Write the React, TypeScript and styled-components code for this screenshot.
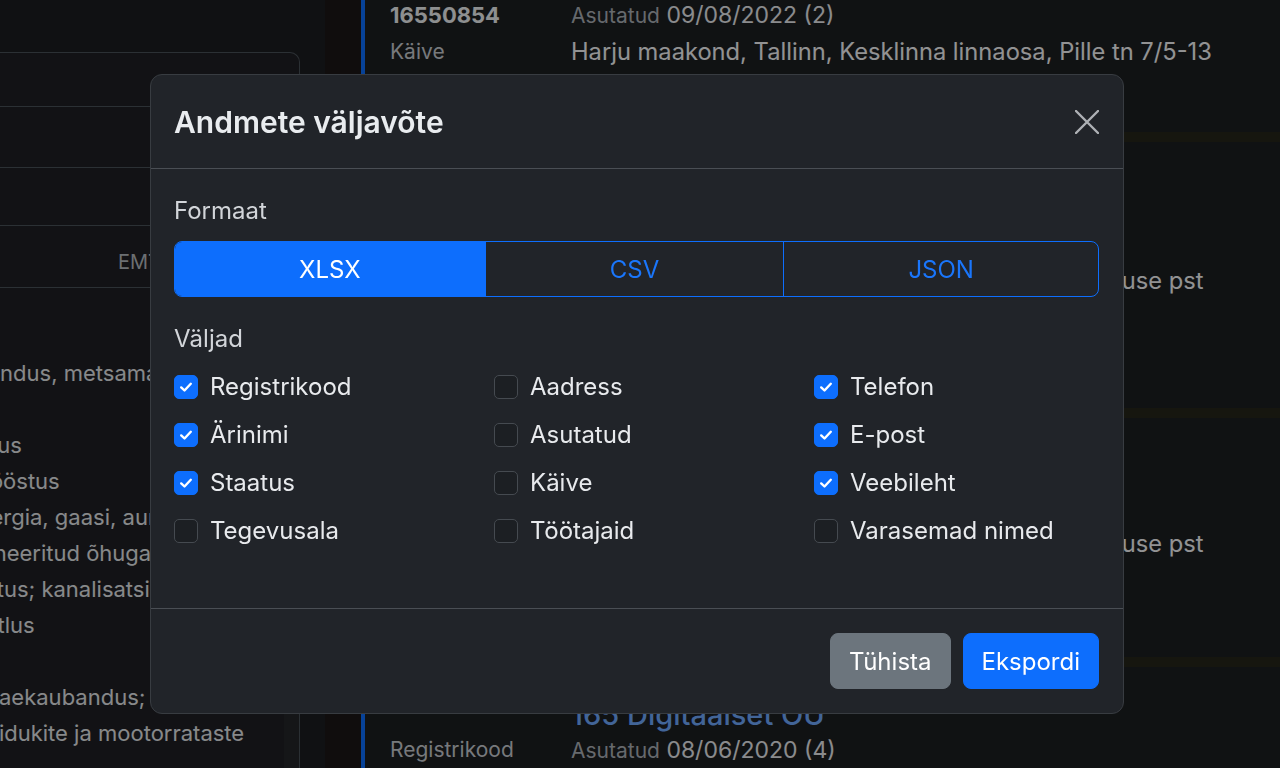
import React from "react";
import styled, { createGlobalStyle } from "styled-components";

const GlobalStyle = createGlobalStyle`
  * { box-sizing: border-box; }
  html, body {
    margin: 0;
    padding: 0;
    width: 1280px;
    height: 768px;
    overflow: hidden;
    background: #1c1d21;
  }
  body {
    font-family: Inter, "Noto Sans", "Liberation Sans", sans-serif;
    -webkit-font-smoothing: antialiased;
  }
`;

/* ---------- background page ---------- */

const Page = styled.div`
  width: 1280px;
  height: 768px;
  overflow: hidden;
  background: #1c1d21;
  display: flex;
`;

const Sidebar = styled.aside`
  flex: 0 0 420px;
  width: 420px;
  min-width: 0;
  overflow: hidden;
  margin-left: -120px;
  padding-top: 52px;
  display: flex;
  flex-direction: column;
`;

const FilterCard = styled.div`
  flex: 1;
  min-width: 0;
  border-top: 1px solid #495057;
  border-right: 1px solid #495057;
  border-top-right-radius: 10px;
  background: #1e1f23;
  display: flex;
  flex-direction: column;
`;

const FilterRow = styled.div<{ $h: number; $indent?: number }>`
  height: ${(p) => p.$h}px;
  flex: 0 0 auto;
  border-bottom: 1px solid #495057;
  display: flex;
  align-items: center;
  padding: 11px 0 0 ${(p) => p.$indent ?? 20}px;
  color: #b4b9be;
  font-size: 20px;
  white-space: nowrap;
  overflow: hidden;
`;

const SectorSection = styled.div`
  flex: 1;
  display: flex;
  min-height: 0;
  min-width: 0;
`;

const SectorList = styled.ul`
  flex: 1;
  min-width: 0;
  margin: 0;
  list-style: none;
  padding: 67px 0 0 20px;
  color: #e2e4e7;
  font-size: 22px;
  line-height: 36px;
  white-space: nowrap;
  overflow: hidden;
`;

const SectorItem = styled.li`
  margin: 0;
`;

const ScrollTrack = styled.div`
  flex: 0 0 15px;
  background: #242529;
`;

const MainArea = styled.main`
  flex: 1;
  display: flex;
  padding-left: 25px;
  min-width: 0;
`;

const Rail = styled.div`
  flex: 0 0 36px;
  background: #1b1717;
`;

const ListViewport = styled.div`
  flex: 1;
  overflow: hidden;
  min-width: 0;
`;

const List = styled.div`
  margin-top: -68px;
  display: flex;
  flex-direction: column;
  gap: 10px;
  background: #26261a;
`;

const Item = styled.article<{ $pt: number; $h: number }>`
  height: ${(p) => p.$h}px;
  flex: 0 0 auto;
  padding: ${(p) => p.$pt}px 24px 0 25px;
  border-left: 4px solid #0d6efd;
  background: #1c1e21;
  display: grid;
  grid-template-columns: 181px 1fr;
  grid-auto-rows: min-content;
  align-content: start;
  white-space: nowrap;
`;

const ItemTitle = styled.div`
  grid-column: 2;
  font-size: 29px;
  line-height: 34px;
  font-weight: 500;
  color: #6ea8fe;
`;

const LeftCell = styled.div<{ $strong?: boolean }>`
  grid-column: 1;
  line-height: 36px;
  font-size: ${(p) => (p.$strong ? 22 : 21)}px;
  font-weight: ${(p) => (p.$strong ? 700 : 400)};
  color: ${(p) => (p.$strong ? "#eceef1" : "#c6cacf")};
`;

const RightCell = styled.div<{ $address?: boolean }>`
  grid-column: 2;
  line-height: 36px;
  font-size: ${(p) => (p.$address ? 23.7 : 23)}px;
  color: ${(p) => (p.$address ? "#f3f4f6" : "#e6e8eb")};
`;

const Muted = styled.span`
  color: #aab0b6;
  font-size: 21px;
`;

/* ---------- modal ---------- */

const Backdrop = styled.div`
  position: fixed;
  inset: 0;
  background: rgba(0, 0, 0, 0.4);
`;

const ModalLayer = styled.div`
  position: fixed;
  inset: 0;
  padding: 74px 0 0 150px;
`;

const Dialog = styled.div`
  width: 974px;
  height: 640px;
  background: #212429;
  border: 1px solid #383c41;
  border-radius: 12px;
  display: flex;
  flex-direction: column;
  color: #e6e8eb;
  overflow: hidden;
`;

const Header = styled.header`
  height: 94px;
  flex: 0 0 94px;
  padding: 0 24px 0 23px;
  border-bottom: 1px solid #4a4e54;
  display: flex;
  align-items: center;
  justify-content: space-between;
`;

const Title = styled.h5`
  margin: 0;
  font-size: 30px;
  line-height: 42px;
  font-weight: 600;
  color: #e9ecef;
`;

const CloseButton = styled.button`
  width: 24px;
  height: 24px;
  padding: 0;
  border: 0;
  background: transparent;
  color: #aeb1b5;
  display: flex;
  align-items: center;
  justify-content: center;
  cursor: pointer;
`;

const Body = styled.div`
  flex: 1;
  padding: 24px 24px 24px 23px;
  display: flex;
  flex-direction: column;
`;

const SectionLabel = styled.div<{ $mt?: number }>`
  font-size: 24px;
  line-height: 36px;
  color: #d2d5d9;
  margin-top: ${(p) => p.$mt ?? 0}px;
  margin-bottom: 12px;
`;

const ButtonGroup = styled.div`
  display: flex;
  height: 56px;
  border: 1px solid #0d6efd;
  border-radius: 8px;
  overflow: hidden;
`;

const GroupButton = styled.button<{ $active?: boolean }>`
  flex: 1 1 auto;
  border: 0;
  border-left: 1px solid #0d6efd;
  background: ${(p) => (p.$active ? "#0d6efd" : "transparent")};
  color: ${(p) => (p.$active ? "#ffffff" : "#1a76fb")};
  font-family: inherit;
  font-size: 24px;
  cursor: pointer;
  &:first-child {
    border-left: 0;
  }
`;

const FieldGrid = styled.div`
  display: grid;
  grid-template-columns: repeat(3, 320px);
  grid-auto-rows: 36px;
  row-gap: 12px;
`;

const FieldLabel = styled.label`
  display: flex;
  align-items: center;
  gap: 12px;
  font-size: 24px;
  line-height: 36px;
  color: #e8eaed;
  white-space: nowrap;
`;

const Box = styled.span<{ $checked?: boolean }>`
  width: 24px;
  height: 24px;
  flex: 0 0 24px;
  border-radius: 5px;
  border: 1px solid ${(p) => (p.$checked ? "#0d6efd" : "#454a50")};
  background: ${(p) => (p.$checked ? "#0d6efd" : "#1c1f23")};
  display: flex;
  align-items: center;
  justify-content: center;
`;

const Footer = styled.footer`
  flex: 0 0 auto;
  border-top: 1px solid #4a4e54;
  padding: 24px;
  display: flex;
  justify-content: flex-end;
  gap: 12px;
`;

const ActionButton = styled.button<{ $variant: "secondary" | "primary" }>`
  height: 56px;
  padding: 0 18px;
  border-radius: 8px;
  border: 1px solid ${(p) => (p.$variant === "primary" ? "#0d6efd" : "#6c757d")};
  background: ${(p) => (p.$variant === "primary" ? "#0d6efd" : "#6c757d")};
  color: #ffffff;
  font-family: inherit;
  font-size: 24px;
  cursor: pointer;
`;

/* ---------- data ---------- */

const sectors: string[][] = [
  ["Põllumajandus, metsamajandus ja", "kalapüük"],
  ["Mäetööstus"],
  ["Töötlev tööstus"],
  ["Elektrienergia, gaasi, auru ja", "konditsioneeritud õhuga varustamine"],
  ["Veevarustus; kanalisatsioon, jäätme- ja", "saastekäitlus"],
  ["Ehitus"],
  ["Hulgi- ja jaekaubandus;", "mootorsõidukite ja mootorrataste", "remont"],
];

type Field = { label: string; checked: boolean };
const fields: Field[] = [
  { label: "Registrikood", checked: true },
  { label: "Aadress", checked: false },
  { label: "Telefon", checked: true },
  { label: "Ärinimi", checked: true },
  { label: "Asutatud", checked: false },
  { label: "E-post", checked: true },
  { label: "Staatus", checked: true },
  { label: "Käive", checked: false },
  { label: "Veebileht", checked: true },
  { label: "Tegevusala", checked: false },
  { label: "Töötajaid", checked: false },
  { label: "Varasemad nimed", checked: false },
];

type Row = { left?: string; strong?: boolean; date?: string; address?: string };
type Company = { title: string; pt: number; h: number; rows: Row[] };

const companies: Company[] = [
  {
    title: "Põhjala Andmeteenused OÜ",
    pt: 31,
    h: 200,
    rows: [
      { left: "16550854", strong: true, date: "09/08/2022 (2)" },
      { left: "Käive", address: "Harju maakond, Tallinn, Kesklinna linnaosa, Pille tn 7/5-13" },
      { left: "—", strong: true },
    ],
  },
  {
    title: "Mustamäe Ehitus OÜ",
    pt: 50,
    h: 266,
    rows: [
      { left: "Registrikood", date: "14/03/2019 (1)" },
      { left: "14688210", strong: true, address: "Harju maakond, Tallinn, Mustamäe linnaosa, Sõpruse pst" },
    ],
  },
  {
    title: "Sõpruse Kaubandus OÜ",
    pt: 37,
    h: 239,
    rows: [
      { left: "Registrikood", date: "21/11/2017 (3)" },
      { left: "14377102", strong: true, address: "Harju maakond, Tallinn, Mustamäe linnaosa, Sõpruse pst" },
    ],
  },
  {
    title: "165 Digitaalset OÜ",
    pt: 31,
    h: 200,
    rows: [
      { left: "Registrikood", date: "08/06/2020 (4)" },
      { left: "14987654", strong: true, address: "Harju maakond, Tallinn" },
    ],
  },
];

/* ---------- icons ---------- */

const CloseIcon = () => (
  <svg width="24" height="24" viewBox="0 0 24 24" fill="none">
    <path d="M1 1L23 23M23 1L1 23" stroke="currentColor" strokeWidth="2.4" strokeLinecap="round" />
  </svg>
);

const CheckIcon = () => (
  <svg width="16" height="16" viewBox="0 0 16 16" fill="none">
    <path d="M3.2 8.4L6.5 11.5L12.8 4.8" stroke="#ffffff" strokeWidth="2.4" strokeLinecap="round" strokeLinejoin="round" />
  </svg>
);

/* ---------- app ---------- */

export default function App() {
  return (
    <>
      <GlobalStyle />
      <Page>
        <Sidebar>
          <FilterCard>
            <FilterRow $h={54} />
            <FilterRow $h={61} />
            <FilterRow $h={58} />
            <FilterRow $h={62} $indent={238}>
              EMTAK tegevusala
            </FilterRow>
            <SectorSection>
              <SectorList>
                {sectors.map((lines, i) => (
                  <SectorItem key={i}>
                    {lines.map((l, j) => (
                      <React.Fragment key={j}>
                        {j > 0 && <br />}
                        {l}
                      </React.Fragment>
                    ))}
                  </SectorItem>
                ))}
              </SectorList>
              <ScrollTrack />
            </SectorSection>
          </FilterCard>
        </Sidebar>

        <MainArea>
          <Rail />
          <ListViewport>
            <List>
              {companies.map((c) => (
                <Item key={c.title} $pt={c.pt} $h={c.h}>
                  <ItemTitle>{c.title}</ItemTitle>
                  {c.rows.map((r, i) => (
                    <React.Fragment key={i}>
                      <LeftCell $strong={r.strong}>{r.left}</LeftCell>
                      <RightCell $address={!!r.address}>
                        {r.date && (
                          <>
                            <Muted>Asutatud</Muted> {r.date}
                          </>
                        )}
                        {r.address}
                      </RightCell>
                    </React.Fragment>
                  ))}
                </Item>
              ))}
            </List>
          </ListViewport>
        </MainArea>
      </Page>

      <Backdrop />
      <ModalLayer>
        <Dialog role="dialog" aria-label="Andmete väljavõte">
          <Header>
            <Title>Andmete väljavõte</Title>
            <CloseButton aria-label="Sulge">
              <CloseIcon />
            </CloseButton>
          </Header>
          <Body>
            <SectionLabel>Formaat</SectionLabel>
            <ButtonGroup>
              <GroupButton $active>XLSX</GroupButton>
              <GroupButton>CSV</GroupButton>
              <GroupButton>JSON</GroupButton>
            </ButtonGroup>
            <SectionLabel $mt={24}>Väljad</SectionLabel>
            <FieldGrid>
              {fields.map((f) => (
                <FieldLabel key={f.label}>
                  <Box $checked={f.checked}>{f.checked && <CheckIcon />}</Box>
                  {f.label}
                </FieldLabel>
              ))}
            </FieldGrid>
          </Body>
          <Footer>
            <ActionButton $variant="secondary">Tühista</ActionButton>
            <ActionButton $variant="primary">Ekspordi</ActionButton>
          </Footer>
        </Dialog>
      </ModalLayer>
    </>
  );
}
